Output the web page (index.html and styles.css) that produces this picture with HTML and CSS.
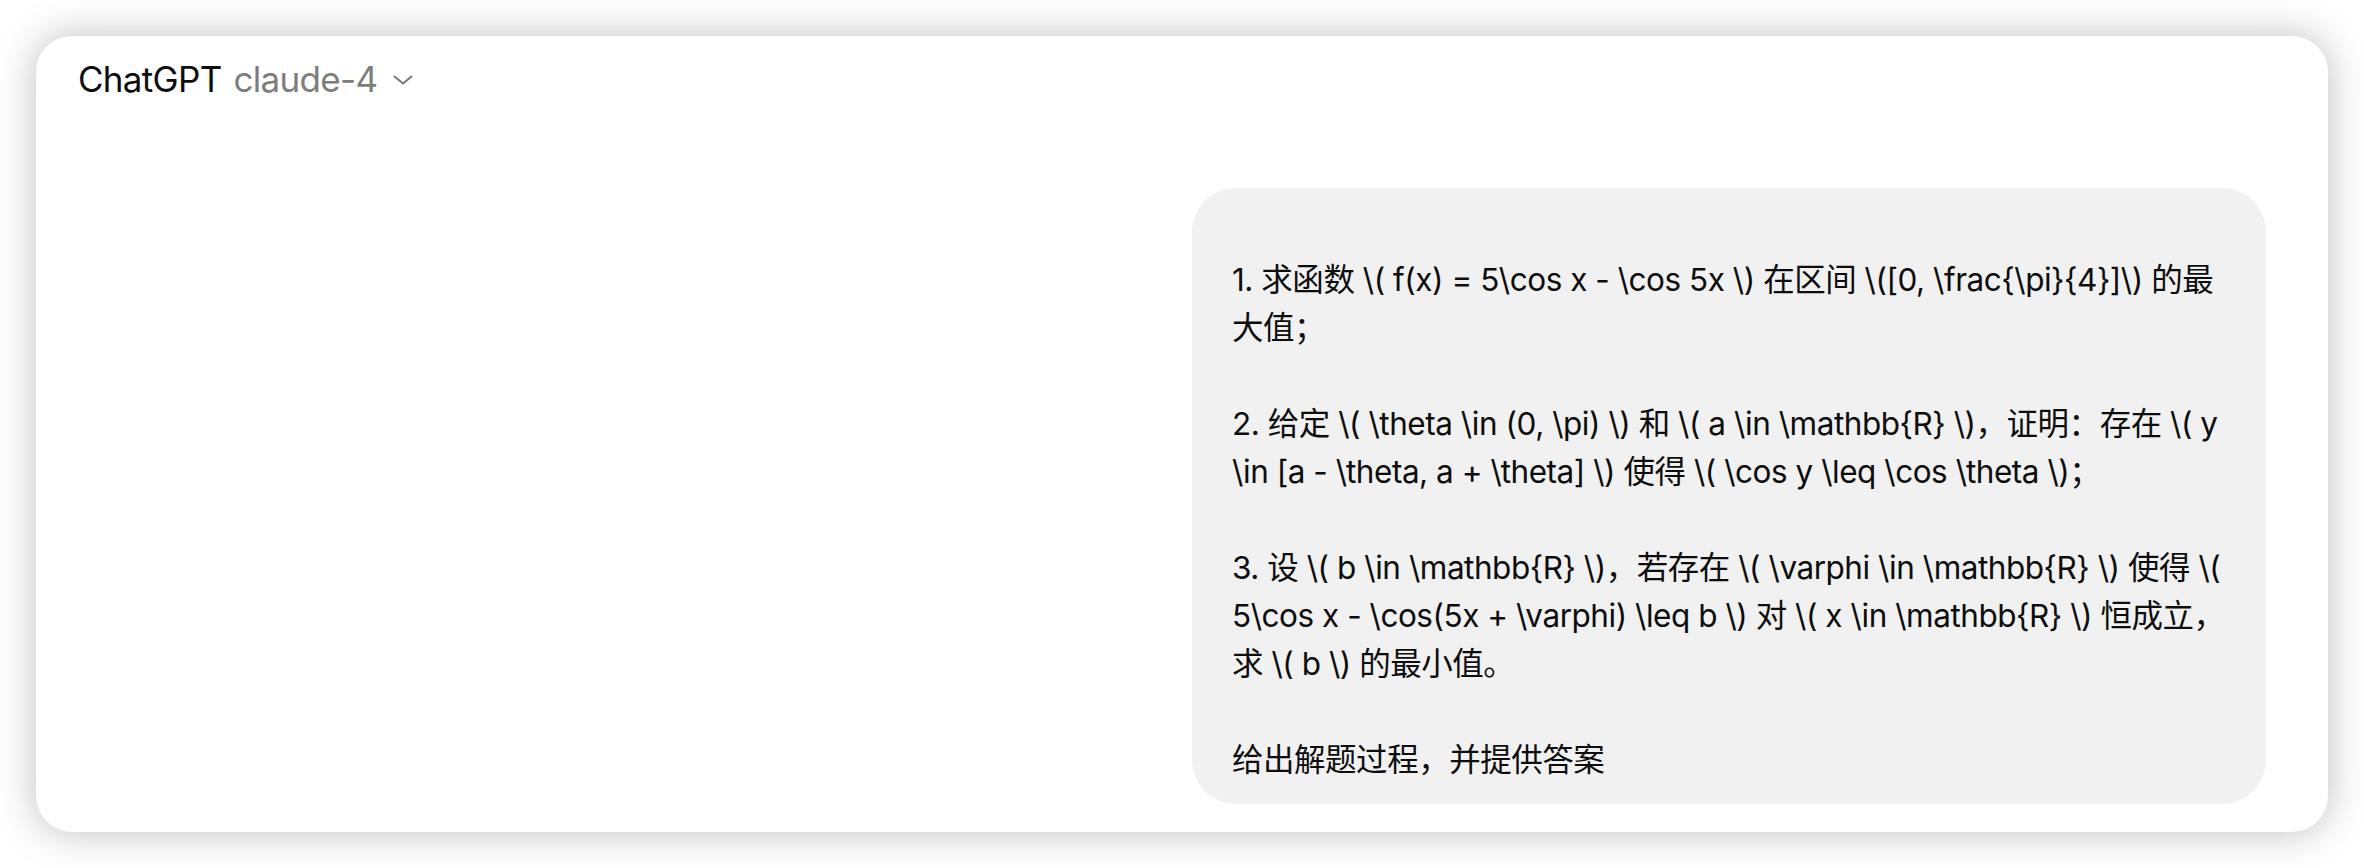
FILE: index.html
```html
<!DOCTYPE html>
<html lang="zh-CN">
<head>
<meta charset="utf-8">
<title>ChatGPT</title>
<link rel="stylesheet" href="styles.css">
</head>
<body>
<div class="card">
  <header class="header">
    <span class="brand">ChatGPT</span>
    <span class="model">claude-4</span>
    <svg class="chevron" width="20" height="10" viewBox="0 0 20 10" aria-hidden="true">
      <polyline points="1.5,1.5 10,8.5 18.5,1.5" fill="none" stroke="#777777" stroke-width="2" stroke-linecap="round" stroke-linejoin="round"/>
    </svg>
  </header>
  <main class="thread">
    <div class="bubble">
<div class="line"> </div><div class="line">1. 求函数 \( f(x) = 5\cos x - \cos 5x \) 在区间 \([0, \frac{\pi}{4}]\) 的最</div><div class="line">大值；</div><div class="line"> </div><div class="line">2. 给定 \( \theta \in (0, \pi) \) 和 \( a \in \mathbb{R} \)，证明：存在 \( y</div><div class="line">\in [a - \theta, a + \theta] \) 使得 \( \cos y \leq \cos \theta \)；</div><div class="line"> </div><div class="line">3. 设 \( b \in \mathbb{R} \)，若存在 \( \varphi \in \mathbb{R} \) 使得 \(</div><div class="line">5\cos x - \cos(5x + \varphi) \leq b \) 对 \( x \in \mathbb{R} \) 恒成立，</div><div class="line">求 \( b \) 的最小值。</div><div class="line"> </div><div class="line">给出解题过程，并提供答案</div>
    </div>
  </main>
</div>
</body>
</html>
```

FILE: styles.css
```css
html, body {
  margin: 0;
  padding: 0;
  background: #ffffff;
}

body {
  width: 2364px;
  height: 868px;
  overflow: hidden;
  font-family: Inter, "Noto Sans CJK SC", sans-serif;
  color: #0d0d0d;
}

.card {
  margin: 36px;
  height: 796px;
  box-sizing: border-box;
  background: #ffffff;
  border-radius: 36px;
  box-shadow: 0 0 40px rgba(0, 0, 0, 0.26);
  display: flex;
  flex-direction: column;
}

.header {
  height: 86px;
  padding: 0 42px;
  display: flex;
  align-items: center;
  font-size: 35px;
  letter-spacing: -0.02em;
}

.brand {
  color: #0d0d0d;
}

.model {
  color: #7d7d7d;
  margin-left: 12px;
}

.chevron {
  margin-left: 16px;
  margin-top: 2px;
}

.thread {
  flex: 1;
  display: flex;
  justify-content: flex-end;
  align-items: flex-start;
  padding: 66px 62px 0 0;
}

.bubble {
  width: 1074px;
  box-sizing: border-box;
  padding: 20px 40px;
  border-radius: 44px;
  background: #f1f1f1;
  font-size: 31.5px;
  line-height: 48px;
  letter-spacing: -0.015em;
}

.line {
  white-space: pre;
  height: 48px;
}
```
